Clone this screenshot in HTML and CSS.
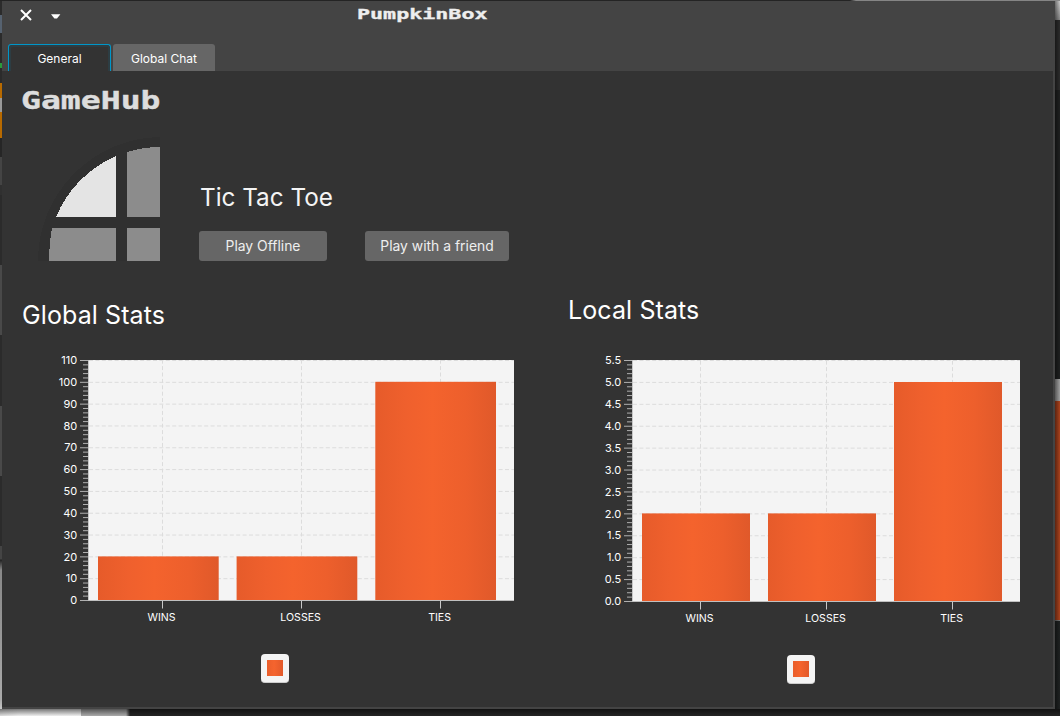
FILE: index.html
```html
<!DOCTYPE html>
<html lang="en">
<head>
<meta charset="utf-8">
<title>PumpkinBox</title>
<link rel="stylesheet" href="styles.css">
</head>
<body>
<div class="desktop">
  <div class="edge edge-left"></div>
  <div class="edge edge-right"></div>
  <div class="edge edge-top"></div>
  <div class="edge edge-bottom"></div>
  <main class="window">
    <header class="titlebar">
      <svg class="controls" width="60" height="30" viewBox="0 0 60 30">
        <path d="M19 9l10 10M29 9l-10 10" stroke="#fff" stroke-width="2" fill="none"/>
        <path d="M49 13.2h9.4l-3.4 4.3h-2.6z" fill="#fff"/>
      </svg>
      <svg class="brand" width="134" height="24" viewBox="0 0 134 24">
        <text class="pixel pixel-sm" x="1" y="17.7" textLength="130.5" lengthAdjust="spacingAndGlyphs">PumpkinBox</text>
      </svg>
    </header>
    <nav class="tabs">
      <div class="tab tab-active">General</div>
      <div class="tab">Global Chat</div>
    </nav>
    <section class="content">
      <svg class="hub" width="144" height="30" viewBox="0 0 144 30">
        <text class="pixel pixel-lg" x="1" y="23.8" textLength="139.5" lengthAdjust="spacingAndGlyphs">GameHub</text>
      </svg>
      <div class="game">
        <svg class="logo" width="122" height="124" viewBox="38 137 122 124" shape-rendering="crispEdges">
          <path d="M38 261A124 124 0 0 1 160 137V261Z" fill="#303030"/>
          <path d="M56 217A114 114 0 0 1 116 156V217Z" fill="#e4e4e4"/>
          <path d="M127 152Q143 147 160 147V217H127Z" fill="#8c8c8c"/>
          <path d="M49 261Q49 244 52 228H116V261Z" fill="#8c8c8c"/>
          <path d="M127 228H160V261H127Z" fill="#8c8c8c"/>
        </svg>
        <div class="game-info">
          <h2 class="game-name">Tic Tac Toe</h2>
          <div class="buttons">
            <div class="btn btn-offline">Play Offline</div>
            <div class="btn btn-friend">Play with a friend</div>
          </div>
        </div>
      </div>
      <div class="stats">
        <div class="panel panel-global">
          <h2 class="heading">Global Stats</h2>
          <svg class="chart" id="global" width="530" height="280" viewBox="2 350 530 280"></svg>
          <div class="legend"><span class="swatch"></span></div>
        </div>
        <div class="panel panel-local">
          <h2 class="heading">Local Stats</h2>
          <svg class="chart" id="local" width="521" height="280" viewBox="532 350 521 280"></svg>
          <div class="legend"><span class="swatch"></span></div>
        </div>
      </div>
    </section>
  </main>
</div>
<script src="charts.js"></script>
</body>
</html>
```
FILE: styles.css
```css
* { box-sizing: border-box; }
body { margin: 0; font-family: Inter, "Liberation Sans", sans-serif; color: #fff; }
.desktop { position: relative; width: 1060px; height: 716px; overflow: hidden; background: #1f1f1f; padding: 1px 5px 7px 2px; }
.edge { position: absolute; }
.edge-left {
  left: 0; top: 0; width: 2px; height: 716px;
  background: linear-gradient(#2b2b2b 15px, #566270 15px 33px, #2b2b2b 33px 63px, #2b9a3c 63px 68px, #2b2b2b 68px 83px, #b86a00 83px 98px, #999 98px 112px, #b86a00 112px 138px, #262626 138px 157px, #444 157px 185px, #303030 185px 195px, #2b2b2b 195px 265px, #494949 265px 335px, #2b2b2b 335px 406px, #494949 406px 476px, #2b2b2b 476px 546px, #444 546px 559px, #222 560px, #888 570px, #999 640px, #aaa 700px, #ddd 716px);
}
.edge-right {
  left: 1055px; top: 0; width: 5px; height: 716px;
  background: linear-gradient(90deg, rgba(0,0,0,.45), rgba(0,0,0,0)), linear-gradient(#d0d0d0, #888 20px, #2c2c2c 20px 90px, #1f2020 90px 379px, #a0a0a0 379px 401px, #a9421d 401px 620px, #777 620px 621px, #1f2222 621px);
}
.edge-top { left: 0; top: 0; width: 1060px; height: 1px; background: linear-gradient(90deg, #242424 850px, #858585 856px); }
.edge-bottom {
  left: 0; top: 709px; width: 1060px; height: 7px;
  background: linear-gradient(rgba(0,0,0,.5), rgba(0,0,0,0)), linear-gradient(90deg, #ddd, #efefef 20px 81px, #aaa 81px 126px, #242424 130px);
}
.window { position: relative; height: 708px; background: #444; display: flex; flex-direction: column; padding: 0 2px 2px 0; }
.titlebar { height: 43px; display: flex; }
.controls { flex: none; }
.brand { margin-left: 294px; }
.pixel { font-family: "DejaVu Sans Mono", "Liberation Mono", monospace; font-weight: 700; fill: #eee; }
.pixel-sm { font-size: 13.5px; stroke: #eee; stroke-width: .3px; }
.pixel-lg { font-size: 24px; fill: #ddd; stroke: #ddd; stroke-width: .4px; }
.tabs { height: 27px; display: flex; gap: 2px; padding-left: 6px; }
.tab { width: 102px; height: 27px; background: #666; border-radius: 3px 3px 0 0; font-size: 12px; line-height: 29px; text-align: center; }
.tab-active { width: 103px; background: #333; border: 1px solid #0096c9; border-bottom: 0; line-height: 27px; box-shadow: inset 2px 2px 0 #2d3d43, inset -2px 0 0 #2d3d43; }
.content { flex: 1; background: #333; display: flex; flex-direction: column; }
.hub { display: block; margin: 14px 0 0 18px; flex: none; }
.game { display: flex; height: 124px; margin: 22px 0 0 36px; gap: 39px; }
.logo { flex: none; }
.game-info { padding-top: 44px; }
.game-name { margin: 0; padding-left: 1px; font-size: 24.3px; font-weight: 400; line-height: 32px; letter-spacing: -.02px; color: #f4f4f4; }
.buttons { display: flex; gap: 38px; margin-top: 18px; }
.btn { height: 30px; border-radius: 3px; background: #666; color: #eee; font-size: 13.9px; line-height: 30px; text-align: center; }
.btn-offline { width: 128px; }
.btn-friend { width: 144px; }
.stats { display: grid; grid-template-columns: 530px 521px; }
.panel { display: flex; flex-direction: column; }
.heading { margin: 0; height: 89px; font-size: 25px; font-weight: 400; line-height: 32px; letter-spacing: .1px; }
.panel-global .heading { padding: 38px 0 0 20px; }
.panel-local .heading { padding: 33px 0 0 36px; }
.chart { display: block; font-size: 11px; fill: #fff; }
.legend { width: 28px; height: 29px; padding: 6px; border-radius: 4px; background: #f4f4f4; border-bottom: 1px solid #ccc; }
.panel-global .legend { margin: 24px 0 0 259px; }
.panel-local .legend { margin: 25px 0 0 255px; }
.swatch { display: block; width: 16px; height: 16px; background: linear-gradient(90deg, #ea5e2b, #f5642e 45%, #e2592a); }
```
FILE: charts.js
```javascript
function drawChart(id, c) {
  const grad = 'grad-' + id;
  let s = `<defs><linearGradient id="${grad}"><stop offset="0" stop-color="#e65b2a"/><stop offset=".25" stop-color="#ef602d"/><stop offset=".47" stop-color="#f4632d"/><stop offset=".75" stop-color="#ed5f2c"/><stop offset="1" stop-color="#e0592a"/></linearGradient></defs>`;
  const line = (x1, y1, x2, y2, color, dash) =>
    `<line x1="${x1}" y1="${y1}" x2="${x2}" y2="${y2}" stroke="${color}"${dash ? ' stroke-dasharray="4 2.4"' : ''}/>`;
  s += `<rect x="${c.left}" y="360" width="${c.right - c.left}" height="${c.bottom - 360}" fill="#f4f4f4"/>`;
  const step = (c.bottom - 360.5) / 11;
  for (let i = 1; i <= 11; i++) {
    const y = c.bottom - i * step;
    s += line(c.left + 1, y, c.right, y, '#dcdcdc', true);
  }
  for (const b of c.bars) s += line(b.tick, c.bottom, b.tick, 360, '#dcdcdc', true);
  for (const b of c.bars) {
    s += `<rect x="${b.x}" y="${b.top}" width="${c.barWidth}" height="${c.bottom - b.top}" fill="url(#${grad})"/>`;
    s += line(b.tick, c.bottom, b.tick, c.bottom + 8, '#c8c8c8');
    s += `<text x="${b.tick - 0.9}" y="${c.bottom + 20.5}" font-size="10.6" text-anchor="middle">${b.name}</text>`;
  }
  for (let i = 0; i <= 55; i++) {
    const y = c.bottom - i * step / 5;
    s += line(c.left - (i % 5 ? 5 : 8), y, c.left, y, '#b0b0b0');
  }
  for (let i = 0; i <= 11; i++) {
    const y = c.bottom - i * step;
    s += `<text x="${c.left - 10.8}" y="${y + 3.7}" text-anchor="end">${(i * c.unit).toFixed(c.digits)}</text>`;
  }
  s += line(c.left + .5, 360, c.left + .5, c.bottom, '#c8c8c8') + line(c.left, c.bottom, c.right, c.bottom, '#c0c0c0');
  document.getElementById(id).innerHTML = s;
}

drawChart('global', {
  left: 88, right: 514, bottom: 600.5, unit: 10, digits: 0, barWidth: 120.7,
  bars: [
    { name: 'WINS', tick: 162.5, x: 98, top: 556.4 },
    { name: 'LOSSES', tick: 301.5, x: 236.6, top: 556.4 },
    { name: 'TIES', tick: 440.5, x: 375.3, top: 381.8 }
  ]
});
drawChart('local', {
  left: 632, right: 1020, bottom: 601.5, unit: 0.5, digits: 1, barWidth: 108,
  bars: [
    { name: 'WINS', tick: 700.5, x: 642, top: 513.4 },
    { name: 'LOSSES', tick: 826.5, x: 768, top: 513.4 },
    { name: 'TIES', tick: 952.5, x: 894, top: 382 }
  ]
});
```
